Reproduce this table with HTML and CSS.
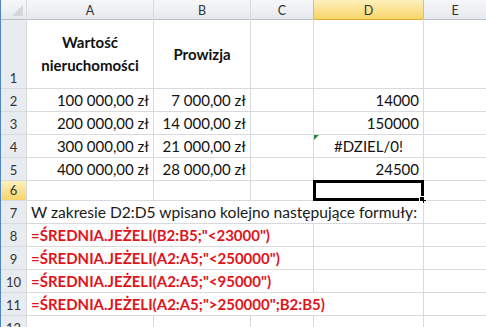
FILE: index.html
```html
<!DOCTYPE html>
<html lang="pl">
<head>
  <meta charset="UTF-8">
  <title>Arkusz1</title>
  <link rel="stylesheet" href="styles.css">
</head>
<body>
  <div class="sheet">
    <div class="corner"></div>
    <div class="col-head">A</div>
    <div class="col-head">B</div>
    <div class="col-head">C</div>
    <div class="col-head active">D</div>
    <div class="col-head">E</div>

    <div class="row-head">1</div>
    <div class="cell title">Wartość<br>nieruchomości</div>
    <div class="cell title">Prowizja</div>
    <div class="cell"></div>
    <div class="cell"></div>
    <div class="cell"></div>

    <div class="row-head">2</div>
    <div class="cell num">100 000,00 zł</div>
    <div class="cell num">7 000,00 zł</div>
    <div class="cell"></div>
    <div class="cell num">14000</div>
    <div class="cell"></div>

    <div class="row-head">3</div>
    <div class="cell num">200 000,00 zł</div>
    <div class="cell num">14 000,00 zł</div>
    <div class="cell"></div>
    <div class="cell num">150000</div>
    <div class="cell"></div>

    <div class="row-head">4</div>
    <div class="cell num">300 000,00 zł</div>
    <div class="cell num">21 000,00 zł</div>
    <div class="cell"></div>
    <div class="cell error">#DZIEL/0!</div>
    <div class="cell"></div>

    <div class="row-head">5</div>
    <div class="cell num">400 000,00 zł</div>
    <div class="cell num">28 000,00 zł</div>
    <div class="cell"></div>
    <div class="cell num">24500</div>
    <div class="cell"></div>

    <div class="row-head active">6</div>
    <div class="cell"></div>
    <div class="cell"></div>
    <div class="cell"></div>
    <div class="cell selected"></div>
    <div class="cell"></div>

    <div class="row-head">7</div>
    <div class="cell note span-4">W zakresie D2:D5 wpisano kolejno następujące formuły:</div>
    <div class="cell"></div>

    <div class="row-head">8</div>
    <div class="cell formula span-3">=ŚREDNIA.JEŻELI(B2:B5;"&lt;23000")</div>
    <div class="cell"></div>
    <div class="cell"></div>

    <div class="row-head">9</div>
    <div class="cell formula span-3">=ŚREDNIA.JEŻELI(A2:A5;"&lt;250000")</div>
    <div class="cell"></div>
    <div class="cell"></div>

    <div class="row-head">10</div>
    <div class="cell formula span-3">=ŚREDNIA.JEŻELI(A2:A5;"&lt;95000")</div>
    <div class="cell"></div>
    <div class="cell"></div>

    <div class="row-head">11</div>
    <div class="cell formula span-4">=ŚREDNIA.JEŻELI(A2:A5;"&gt;250000";B2:B5)</div>
    <div class="cell"></div>

    <div class="row-head">12</div>
    <div class="cell"></div>
    <div class="cell"></div>
    <div class="cell"></div>
    <div class="cell"></div>
    <div class="cell"></div>
  </div>
</body>
</html>
```

FILE: styles.css
```css
* { box-sizing: border-box; }
html, body {
  margin: 0;
  height: 100%;
  overflow: hidden;
  background: #fff;
}
.sheet {
  display: grid;
  grid-template-columns: 25px 126px 96px 62px 109px 1fr;
  grid-template-rows: 19px 68px repeat(4, 22px) 19px repeat(6, 22px);
  gap: 1px;
  background: #d8dadd;
  border-left: 1px solid #4f86c6;
  font-family: Lato, "Liberation Sans", sans-serif;
  font-size: 15px;
  color: #111;
}

/* headers */
.corner, .col-head {
  background: linear-gradient(#f6f7f9, #e6e9ed);
  box-shadow: 0 1px 0 #b9bdc3;
}
.corner {
  position: relative;
}
.corner::after {
  content: "";
  position: absolute;
  right: 3px;
  bottom: 3px;
  border-left: 11px solid transparent;
  border-bottom: 11px solid #d4d6d9;
}
.col-head {
  display: flex;
  align-items: center;
  justify-content: center;
  font-size: 12.5px;
  color: #333;
  padding-top: 1px;
}
.col-head.active {
  background: linear-gradient(#fdf0bc, #f8d56a);
  box-shadow: 0 1px 0 #e2a93b, -1px 0 0 #e8be5c, 1px 0 0 #e8be5c;
}
.row-head {
  display: flex;
  align-items: flex-end;
  justify-content: center;
  padding-bottom: 2px;
  background: #e8ebef;
  font-size: 13px;
  color: #333;
}
.row-head.active {
  background: linear-gradient(#fdf0bc, #f8d56a);
}

/* cells */
.cell {
  background: #fff;
  display: flex;
  align-items: flex-end;
  padding: 0 4px 2px 3px;
  white-space: nowrap;
  position: relative;
}
.cell.title {
  align-items: center;
  justify-content: center;
  text-align: center;
  font-weight: bold;
  line-height: 23px;
  padding: 0;
}
.cell.num {
  justify-content: flex-end;
}
.cell.error {
  justify-content: center;
  padding-left: 0;
  padding-right: 0;
}
.cell.error::before {
  content: "";
  position: absolute;
  left: 0;
  top: 0;
  border-top: 5px solid #1f8b3b;
  border-right: 5px solid transparent;
}
.cell.selected {
  outline: 3px solid #000;
  outline-offset: -2px;
}
.cell.selected::after {
  content: "";
  position: absolute;
  right: -4px;
  bottom: -4px;
  width: 6px;
  height: 6px;
  background: #000;
  border: 1px solid #fff;
}
.span-3 { grid-column: span 3; }
.span-4 { grid-column: span 4; }
.cell.note {
  color: #1a1a1a;
  font-size: 15.6px;
  padding-left: 4px;
}
.cell.formula {
  color: #e1141c;
  font-weight: bold;
  padding-left: 4px;
}
```
